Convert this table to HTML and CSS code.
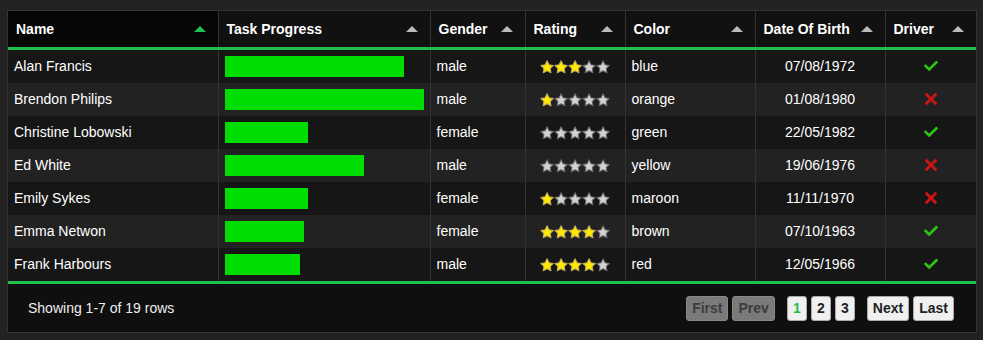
FILE: index.html
```html
<!DOCTYPE html>
<html lang="en">
<head>
  <meta charset="UTF-8">
  <meta name="viewport" content="width=device-width, initial-scale=1.0">
  <title>People Table</title>
  <link rel="stylesheet" href="styles.css">
</head>
<body>
  <!-- Icon symbols -->
  <svg class="sprites" xmlns="http://www.w3.org/2000/svg">
    <symbol id="star" viewBox="0 0 512 512">
      <polygon stroke-width="37.6152" stroke-linecap="round" stroke-linejoin="round" stroke-miterlimit="10" points="259.216,29.942 330.27,173.919 489.16,197.007 374.185,309.08 401.33,467.31 259.216,392.612 117.104,467.31 144.25,309.08 29.274,197.007 188.165,173.919"/>
    </symbol>
    <symbol id="tick" viewBox="0 0 24 24">
      <path fill="#2DC214" fill-rule="evenodd" d="M21.652,3.211c-0.293-0.295-0.77-0.295-1.061,0L9.41,14.34c-0.293,0.297-0.771,0.297-1.062,0L3.449,9.351C3.304,9.203,3.114,9.13,2.923,9.129C2.73,9.128,2.534,9.201,2.387,9.351l-2.165,1.946C0.078,11.445,0,11.63,0,11.823c0,0.194,0.078,0.397,0.223,0.544l4.94,5.184c0.292,0.296,0.771,0.776,1.062,1.07l2.124,2.141c0.292,0.293,0.769,0.293,1.062,0l14.366-14.34c0.293-0.294,0.293-0.777,0-1.071L21.652,3.211z"/>
    </symbol>
    <symbol id="cross" viewBox="0 0 24 24">
      <path fill="#CE1515" d="M22.245,4.015c0.313,0.313,0.313,0.826,0,1.139l-6.276,6.27c-0.313,0.312-0.313,0.826,0,1.14l6.273,6.272c0.313,0.313,0.313,0.826,0,1.14l-2.285,2.277c-0.314,0.312-0.828,0.312-1.142,0l-6.271-6.271c-0.313-0.313-0.828-0.313-1.141,0l-6.276,6.267c-0.313,0.313-0.828,0.313-1.141,0l-2.282-2.28c-0.313-0.313-0.313-0.826,0-1.14l6.278-6.269c0.313-0.312,0.313-0.826,0-1.140L1.709,5.147c-0.314-0.313-0.314-0.827,0-1.14l2.284-2.278C4.308,1.417,4.821,1.417,5.135,1.73L11.405,8c0.314,0.314,0.828,0.314,1.141,0.001l6.276-6.267c0.312-0.312,0.826-0.312,1.141,0L22.245,4.015z"/>
    </symbol>
  </svg>

  <div class="table-box">
    <table class="people">
      <colgroup>
        <col class="c-name">
        <col class="c-progress">
        <col class="c-gender">
        <col class="c-rating">
        <col class="c-color">
        <col class="c-dob">
        <col class="c-driver">
      </colgroup>
      <thead>
        <tr>
          <th class="sorted"><div class="col-title"><span>Name</span><i class="arrow"></i></div></th>
          <th><div class="col-title"><span>Task Progress</span><i class="arrow"></i></div></th>
          <th><div class="col-title"><span>Gender</span><i class="arrow"></i></div></th>
          <th><div class="col-title"><span>Rating</span><i class="arrow"></i></div></th>
          <th><div class="col-title"><span>Color</span><i class="arrow"></i></div></th>
          <th><div class="col-title"><span>Date Of Birth</span><i class="arrow"></i></div></th>
          <th><div class="col-title"><span>Driver</span><i class="arrow"></i></div></th>
        </tr>
      </thead>
      <tbody id="rows"></tbody>
    </table>

    <div class="footer">
      <span class="page-info">Showing 1-7 of 19 rows</span>
      <div class="pagination">
        <button class="page-btn" disabled>First</button>
        <button class="page-btn" disabled>Prev</button>
        <span class="pages">
          <button class="page-btn active">1</button>
          <button class="page-btn">2</button>
          <button class="page-btn">3</button>
        </span>
        <button class="page-btn">Next</button>
        <button class="page-btn">Last</button>
      </div>
    </div>
  </div>

  <script>
    const people = [
      { name: 'Alan Francis', progress: 90, gender: 'male', rating: 3, color: 'blue', dob: '07/08/1972', driver: true },
      { name: 'Brendon Philips', progress: 100, gender: 'male', rating: 1, color: 'orange', dob: '01/08/1980', driver: false },
      { name: 'Christine Lobowski', progress: 42, gender: 'female', rating: 0, color: 'green', dob: '22/05/1982', driver: true },
      { name: 'Ed White', progress: 70, gender: 'male', rating: 0, color: 'yellow', dob: '19/06/1976', driver: false },
      { name: 'Emily Sykes', progress: 42, gender: 'female', rating: 1, color: 'maroon', dob: '11/11/1970', driver: false },
      { name: 'Emma Netwon', progress: 40, gender: 'female', rating: 4, color: 'brown', dob: '07/10/1963', driver: true },
      { name: 'Frank Harbours', progress: 38, gender: 'male', rating: 4, color: 'red', dob: '12/05/1966', driver: true }
    ];

    // stars for the rating column
    function stars(n) {
      let out = '';
      for (let i = 0; i < 5; i++) {
        out += '<svg class="star' + (i < n ? ' on' : '') + '"><use href="#star"/></svg>';
      }
      return out;
    }

    const body = document.getElementById('rows');
    body.innerHTML = people.map(p => `
      <tr>
        <td>${p.name}</td>
        <td class="progress"><div class="bar" style="width:${p.progress}%"></div></td>
        <td>${p.gender}</td>
        <td class="center"><span class="stars">${stars(p.rating)}</span></td>
        <td>${p.color}</td>
        <td class="center">${p.dob}</td>
        <td class="center"><svg class="flag"><use href="#${p.driver ? 'tick' : 'cross'}"/></svg></td>
      </tr>`).join('');
  </script>
</body>
</html>
```

FILE: styles.css
```css
body {
  margin: 0;
  background: #222;
  font-family: 'Liberation Sans', Arial, sans-serif;
  font-size: 14px;
  color: #fff;
}

.sprites {
  display: none;
}

.table-box {
  margin: 10px 0 0 7px;
  width: 968px;
  border: 1px solid #333;
  background: #161616;
}

.people {
  width: 100%;
  border-collapse: collapse;
  table-layout: fixed;
}

.c-name { width: 210px; }
.c-progress { width: 212px; }
.c-gender { width: 95px; }
.c-rating { width: 100px; }
.c-color { width: 130px; }
.c-dob { width: 130px; }
.c-driver { width: 91px; }

/* header */
.people th {
  height: 36px;
  padding: 0 12px 0 8px;
  background: #111;
  border-right: 1px solid #333;
  border-bottom: 3px solid #1fc04b;
  text-align: left;
  font-weight: bold;
  color: #fff;
}

.people th:last-child {
  border-right: none;
}

.people th.sorted {
  background: #060606;
}

.col-title {
  display: flex;
  justify-content: space-between;
  align-items: center;
}

.arrow {
  width: 0;
  height: 0;
  border-left: 6px solid transparent;
  border-right: 6px solid transparent;
  border-bottom: 6px solid #bbb;
}

.sorted .arrow {
  border-bottom-color: #1fc04b;
}

/* rows */
.people td {
  height: 33px;
  padding: 0 6px 1px;
  border-right: 1px solid #333;
  vertical-align: middle;
  white-space: nowrap;
  overflow: hidden;
  box-sizing: border-box;
}

.people td:last-child {
  border-right: none;
}

.people tbody tr:nth-child(odd) {
  background: #161616;
}

.people tbody tr:nth-child(even) {
  background: #222;
}

.people td.center {
  text-align: center;
}

.people td.progress {
  padding: 6px 6px;
}

.bar {
  height: 21px;
  background: #00dd00;
}

.stars {
  display: inline-flex;
  vertical-align: middle;
}

.star {
  width: 14px;
  height: 14px;
  fill: #d2d2d2;
  stroke: #686868;
}

.star.on {
  fill: #ffea00;
  stroke: #c1ab60;
}

.flag {
  width: 14px;
  height: 14px;
  vertical-align: middle;
  margin-top: -3px;
}

/* footer */
.footer {
  display: flex;
  justify-content: space-between;
  align-items: center;
  height: 48px;
  padding: 0 20px;
  background: #0f0f0f;
  border-top: 3px solid #1fc04b;
  color: #eee;
}

.pagination {
  display: flex;
  align-items: center;
}

.pages {
  display: flex;
  margin: 0 8px;
}

.page-btn {
  margin: 0 2px;
  padding: 3px 5px;
  min-width: 20px;
  line-height: 17px;
  font-family: inherit;
  font-size: 14px;
  font-weight: bold;
  color: #222;
  background: #f0f0f0;
  border: 1px solid #aaa;
  border-radius: 3px;
}

.page-btn:disabled {
  color: #3c3c3c;
  background: #7a7a7a;
  border-color: #888;
}

.page-btn.active {
  color: #1fc04b;
}
```
